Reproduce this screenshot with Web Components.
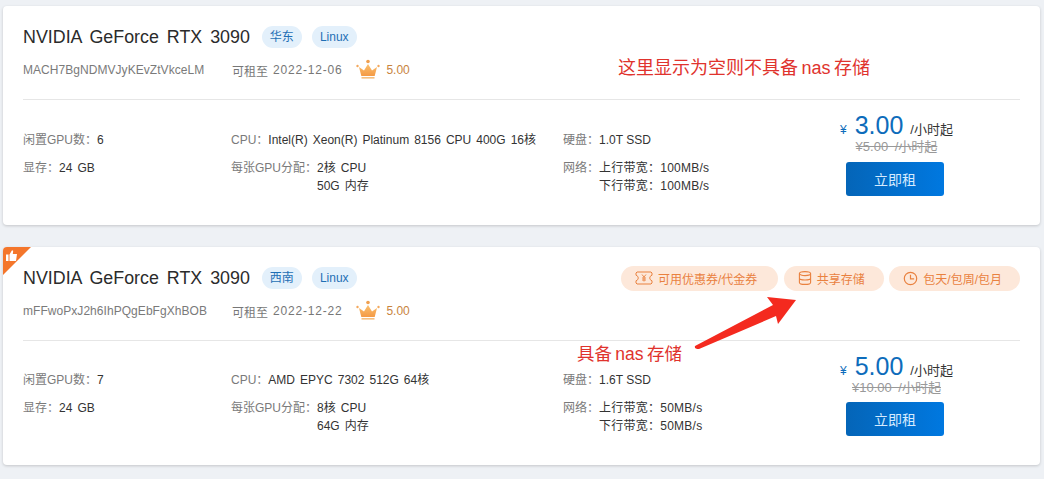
<!DOCTYPE html>
<html lang="zh">
<head>
<meta charset="utf-8">
<style>
html,body{margin:0;padding:0;background:#eef1f5;}
body{width:1044px;height:479px;overflow:hidden;font-family:"Liberation Sans","Noto Sans CJK SC",sans-serif;}
</style>
</head>
<body>
<gpu-page>
<gpu-card style="--rowpad:14px;--h:219px;--btn:6px" region="华东" machine="MACH7BgNDMVJyKEvZtVkceLM" until="2022-12-06" gpus="6" cpu="Intel(R) Xeon(R) Platinum 8156 CPU 400G 16核" c="2核 CPU" m="50G 内存" disk="1.0T SSD" up="100MB/s" down="100MB/s" price="3.00" old="5.00"></gpu-card>
<gpu-card style="--rowpad:13px;--h:218px;--btn:5px" featured region="西南" machine="mFFwoPxJ2h6IhPQgEbFgXhBOB" until="2022-12-22" gpus="7" cpu="AMD EPYC 7302 512G 64核" c="8核 CPU" m="64G 内存" disk="1.6T SSD" up="50MB/s" down="50MB/s" price="5.00" old="10.00">
  <feature-pill slot="features" icon="ticket" style="padding-right:21px">可用优惠券/代金券</feature-pill>
  <feature-pill slot="features" icon="db" style="padding-right:19px">共享存储</feature-pill>
  <feature-pill slot="features" icon="clock" style="padding-right:18px">包天/包周/包月</feature-pill>
</gpu-card>
<nas-annotation></nas-annotation>
</gpu-page>
<script>
class GpuPage extends HTMLElement{
  constructor(){super();this.attachShadow({mode:'open'}).innerHTML=`<style>
  :host{display:flex;flex-direction:column;gap:22px;padding:6px 4px 0 3px;position:relative;box-sizing:border-box;width:1044px;height:479px}
  </style><slot></slot>`;}
}
class TagPill extends HTMLElement{
  constructor(){super();this.attachShadow({mode:'open'}).innerHTML=`<style>
  :host{display:inline-flex;align-items:center;justify-content:center;height:22px;padding:0 8px;border-radius:11px;background:#e3f0fb;color:#1f6fb5;font-size:12px;line-height:22px}
  </style><slot></slot>`;}
}
const ICONS={
 ticket:`<svg width="18" height="14" viewBox="0 0 18 14" fill="none" stroke="#e9813f" stroke-width="1"><path d="M2 1h14l1 1v2.200c-1.600.6-2.200 1.600-2.200 2.800s.6 2.200 2.200 2.800V12l-1 1H2l-1-1V9.800C2.600 9.200 3.200 8.200 3.200 7S2.600 4.800 1 4.200V2z"/><path d="M7 3.500l2 2.500 2-2.500M9 6v4.500M7 7h4M7 9h4" stroke-width=".9"/></svg>`,
 db:`<svg width="14" height="14" viewBox="0 0 14 14" fill="none" stroke="#e9813f" stroke-width="1.1"><ellipse cx="7" cy="2.600" rx="5.600" ry="2"/><path d="M1.400 2.600v8.800c0 1.100 2.500 2 5.600 2s5.600-.9 5.600-2V2.600M1.400 7c0 1.100 2.500 2 5.600 2s5.600-.9 5.600-2"/></svg>`,
 clock:`<svg width="15" height="15" viewBox="0 0 15 15" fill="none" stroke="#e9813f" stroke-width="1.2"><circle cx="7.500" cy="7.500" r="6.200"/><path d="M7.500 3.800v4h3.600"/></svg>`
};
class FeaturePill extends HTMLElement{
  constructor(){super();const r=this.attachShadow({mode:'open'});
    r.innerHTML=`<style>
    :host{display:inline-flex;align-items:center;gap:5px;height:25px;padding:0 15px 0 14px;border-radius:13px;background:#fde8da;color:#e9813f;font-size:12px;white-space:nowrap}
    svg{display:block}
    </style>${ICONS[this.getAttribute('icon')]||''}<slot></slot>`;}
}
class GpuCard extends HTMLElement{
  constructor(){super();
    const a=n=>this.getAttribute(n)||'';
    this.attachShadow({mode:'open'}).innerHTML=`<style>
    :host{display:block;position:relative;box-sizing:border-box;height:var(--h);padding:20px 20px 0;background:#fff;border-radius:4px;box-shadow:0 1px 3px rgba(0,0,0,.18);color:#333;overflow:hidden}
    .head{box-sizing:border-box;height:74px;padding-top:1px;border-bottom:1px solid #e6e6e6;display:flex;flex-direction:column;gap:13px}
    .title{display:flex;align-items:center;gap:10px;height:20px}
    h2{margin:0 2px 0 0;font-size:17.85px;font-weight:400;color:#2b2b2b;word-spacing:3px;line-height:20px;white-space:nowrap}
    .sub{display:flex;align-items:center;font-size:12px;color:#777;height:20px}
    .mach{width:209px;letter-spacing:.05px;color:#7a7a7a}
    .date{letter-spacing:.8px;margin-left:5px}
    .crown{margin-left:14px;margin-right:6px;display:block}
    .score{color:#c8843e;font-size:12px}
    .feat{margin-left:auto;display:flex;gap:5.5px;align-items:center}
    .body{display:grid;grid-template-columns:208px 332px 267px 130px;font-size:12px;color:#333;padding-top:17px}
    .col{padding-top:var(--rowpad);display:flex;flex-direction:column;gap:10px;line-height:18px}
    .l{color:#7a7a7a}
    .row{word-spacing:1.7px;white-space:nowrap;display:flex}
    .tight .row{word-spacing:0}
    .val{display:flex;flex-direction:column}
    .tight .val{letter-spacing:.25px}
    .price{display:flex;flex-direction:column;align-items:center}
    .now{display:flex;align-items:baseline;color:#0d6cbb;height:32px;line-height:32px;margin:-8px 0 0 3px;white-space:nowrap}
    .now b{font-weight:400;font-size:25px;margin:0 7px 0 8px}
    .now i{font-style:normal;font-size:12px}
    .now span{font-size:13px;color:#333}
    .old{font-size:13px;color:#999;text-decoration:line-through;line-height:18px;margin:-3px 0 0 3px;word-spacing:3px;white-space:nowrap}
    button{margin-top:var(--btn);width:98px;height:34px;border:0;border-radius:3px;background:linear-gradient(90deg,#0465b8,#0078e0);color:#d6ebff;font:14px "Liberation Sans","Noto Sans CJK SC",sans-serif}
    .tri{position:absolute;left:0;top:0;width:28px;height:28px}
    </style>
    ${this.hasAttribute('featured')?`<svg class="tri" viewBox="0 0 28 28"><path d="M0 0h28L0 28z" fill="#f4762b"/><path d="M3 7.500h2.500V14H3zM6.500 7.500L9 3.200l1.200.6-.4 3.200H14l-1 7H6.500z" fill="#fff"/></svg>`:''}
    <div class="head">
      <div class="title"><h2>NVIDIA GeForce RTX 3090</h2><tag-pill>${a('region')}</tag-pill><tag-pill>Linux</tag-pill><div class="feat"><slot name="features"></slot></div></div>
      <div class="sub">
        <span class="mach">${a('machine')}</span><span>可租至</span><span class="date">${a('until')}</span>
        <svg class="crown" width="24" height="22" viewBox="0 0 24 22"><defs><linearGradient id="g" x1="0" y1="0" x2="0" y2="1"><stop offset="0" stop-color="#fbc06e"/><stop offset="1" stop-color="#f49a45"/></linearGradient></defs><circle cx="12" cy="2.500" r="1.800" fill="#f0a050"/><circle cx="1.500" cy="7" r="1.200" fill="#f4a85c"/><circle cx="22.500" cy="7" r="1.200" fill="#f4a85c"/><path d="M3 8l5 3.500L12 5l4 6.500L21 8l-2.300 9H5.300z" fill="url(#g)"/><rect x="5.500" y="18.200" width="13" height="1.300" fill="#f4b060"/></svg>
        <span class="score">5.00</span>
      </div>
    </div>
    <div class="body">
      <div class="col"><div class="row"><span class="l">闲置GPU数：</span>${a('gpus')}</div><div class="row"><span class="l">显存：</span>24 GB</div></div>
      <div class="col"><div class="row"><span class="l">CPU：</span>${a('cpu')}</div><div class="row"><span class="l">每张GPU分配：</span><span class="val"><span>${a('c')}</span><span>${a('m')}</span></span></div></div>
      <div class="col tight"><div class="row"><span class="l">硬盘：</span>${a('disk')}</div><div class="row"><span class="l">网络：</span><span class="val"><span>上行带宽：${a('up')}</span><span>下行带宽：${a('down')}</span></span></div></div>
      <div class="price">
        <div class="now"><i>¥</i><b>${a('price')}</b><span>/小时起</span></div>
        <div class="old">¥${a('old')} /小时起</div>
        <button>立即租</button>
      </div>
    </div>`;}
}
class NasAnnotation extends HTMLElement{
  constructor(){super();this.attachShadow({mode:'open'}).innerHTML=`<style>
    :host{display:block;position:absolute;left:0;top:0;width:1044px;height:479px;pointer-events:none;color:#e0332d}
    .t{position:absolute;line-height:22px;white-space:nowrap}
    .a{left:577px;top:343px;font-size:17.5px;word-spacing:-1.5px}
    .b{left:618px;top:57px;font-size:18px;word-spacing:-1.5px}
    svg{position:absolute;left:0;top:0}
    </style><div class="t b">这里显示为空则不具备 nas 存储</div><div class="t a">具备 nas 存储</div>
    <svg width="1044" height="479"><path d="M695 346L773 305 767 297 796 300 778 324 776 316 699 349Q694 349 695 346z" fill="#f42a1f"/></svg>`;}
}
customElements.define('tag-pill',TagPill);
customElements.define('feature-pill',FeaturePill);
customElements.define('gpu-card',GpuCard);
customElements.define('nas-annotation',NasAnnotation);
customElements.define('gpu-page',GpuPage);
</script>
</body>
</html>
